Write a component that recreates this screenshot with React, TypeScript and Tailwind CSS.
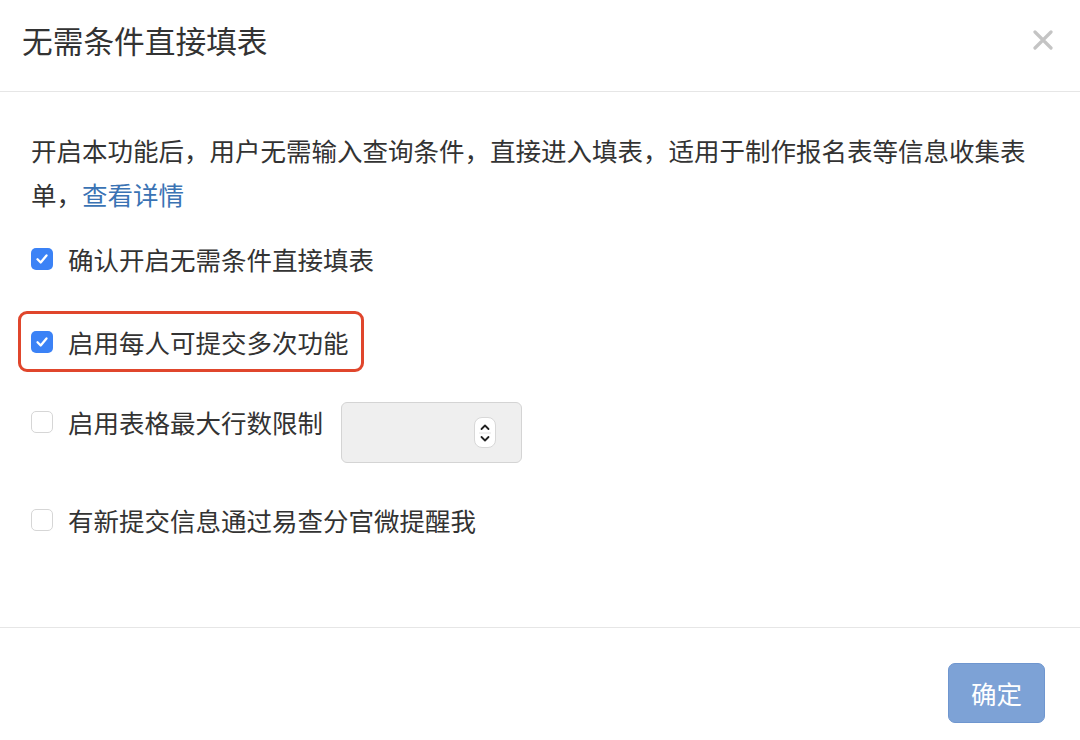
import React from "react";

const font = { fontFamily: '"Noto Sans CJK SC", "Noto Sans", sans-serif' };

function Checked() {
  return (
    <div className="w-[22px] h-[22px] rounded-[5px] bg-[#3b82f6] flex items-center justify-center shrink-0">
      <svg width="14" height="14" viewBox="0 0 14 14" fill="none">
        <path d="M2.5 7.3 L5.7 10.5 L11.5 3.5" stroke="white" strokeWidth="2.3" strokeLinecap="round" strokeLinejoin="round" />
      </svg>
    </div>
  );
}

function Unchecked() {
  return <div className="w-[22px] h-[22px] rounded-[5px] bg-white border border-[#d6d6d6] shrink-0" />;
}

export default function App() {
  return (
    <div className="w-[1080px] h-[740px] bg-white text-[#333] flex flex-col overflow-hidden" style={font}>
      {/* header */}
      <div className="h-[92px] border-b border-[#e6e6e6] flex items-center justify-between pl-[22px] pr-[27px] shrink-0">
        <div className="text-[30.7px] leading-[40px] pb-[12px]">无需条件直接填表</div>
        <svg width="20" height="20" viewBox="0 0 20 20" className="mb-[12px]">
          <path d="M2 2 L18 18 M18 2 L2 18" stroke="#c4c4c4" strokeWidth="3.2" strokeLinecap="round" />
        </svg>
      </div>

      {/* body */}
      <div className="pt-[36px] pl-[31px] pr-[31px] h-[536px] border-b border-[#e6e6e6] shrink-0">
        <div className="text-[25.5px] leading-[44px]">
          开启本功能后，用户无需输入查询条件，直接进入填表，适用于制作报名表等信息收集表单，<span className="text-[#3a73b4]">查看详情</span>
        </div>

        <div className="mt-[21px] flex items-center gap-[15px] h-[44px]">
          <Checked />
          <span className="text-[25.5px] leading-[44px]">确认开启无需条件直接填表</span>
        </div>

        <div className="mt-[30px] ml-[-13px] w-[346px] h-[61px] border-[3px] border-[#e0462c] rounded-[9px] flex items-center gap-[15px] pl-[10px]">
          <Checked />
          <span className="text-[25.5px] leading-[44px]">启用每人可提交多次功能</span>
        </div>

        <div className="mt-[28px] flex items-start">
          <div className="flex items-center gap-[15px] h-[44px]">
            <Unchecked />
            <span className="text-[25.5px] leading-[44px]">启用表格最大行数限制</span>
          </div>
          <div className="ml-[18px] mt-[2px] w-[181px] h-[61px] rounded-[6px] bg-[#efefef] border border-[#d4d4d4] flex items-center justify-end pr-[25px]">
            <div className="w-[22px] h-[31px] rounded-[8px] bg-white border border-[#d8d8d8] flex flex-col items-center justify-center">
              <svg width="12" height="26" viewBox="0 0 12 26" fill="none">
                <path d="M2.5 9 L6 5.5 L9.5 9" stroke="#222" strokeWidth="1.8" strokeLinecap="round" strokeLinejoin="round" />
                <line x1="0" y1="13" x2="12" y2="13" stroke="#e2e2e2" strokeWidth="1" />
                <path d="M2.5 17 L6 20.5 L9.5 17" stroke="#222" strokeWidth="1.8" strokeLinecap="round" strokeLinejoin="round" />
              </svg>
            </div>
          </div>
        </div>

        <div className="mt-[35px] flex items-center gap-[15px] h-[44px]">
          <Unchecked />
          <span className="text-[25.5px] leading-[44px]">有新提交信息通过易查分官微提醒我</span>
        </div>
      </div>

      {/* footer */}
      <div className="flex justify-end pt-[35px] pr-[35px]">
        <button className="w-[97px] h-[60px] rounded-[7px] bg-[#7da2d6] border border-[#6f96cf] text-white text-[25.5px]" style={font}>
          确定
        </button>
      </div>
    </div>
  );
}
